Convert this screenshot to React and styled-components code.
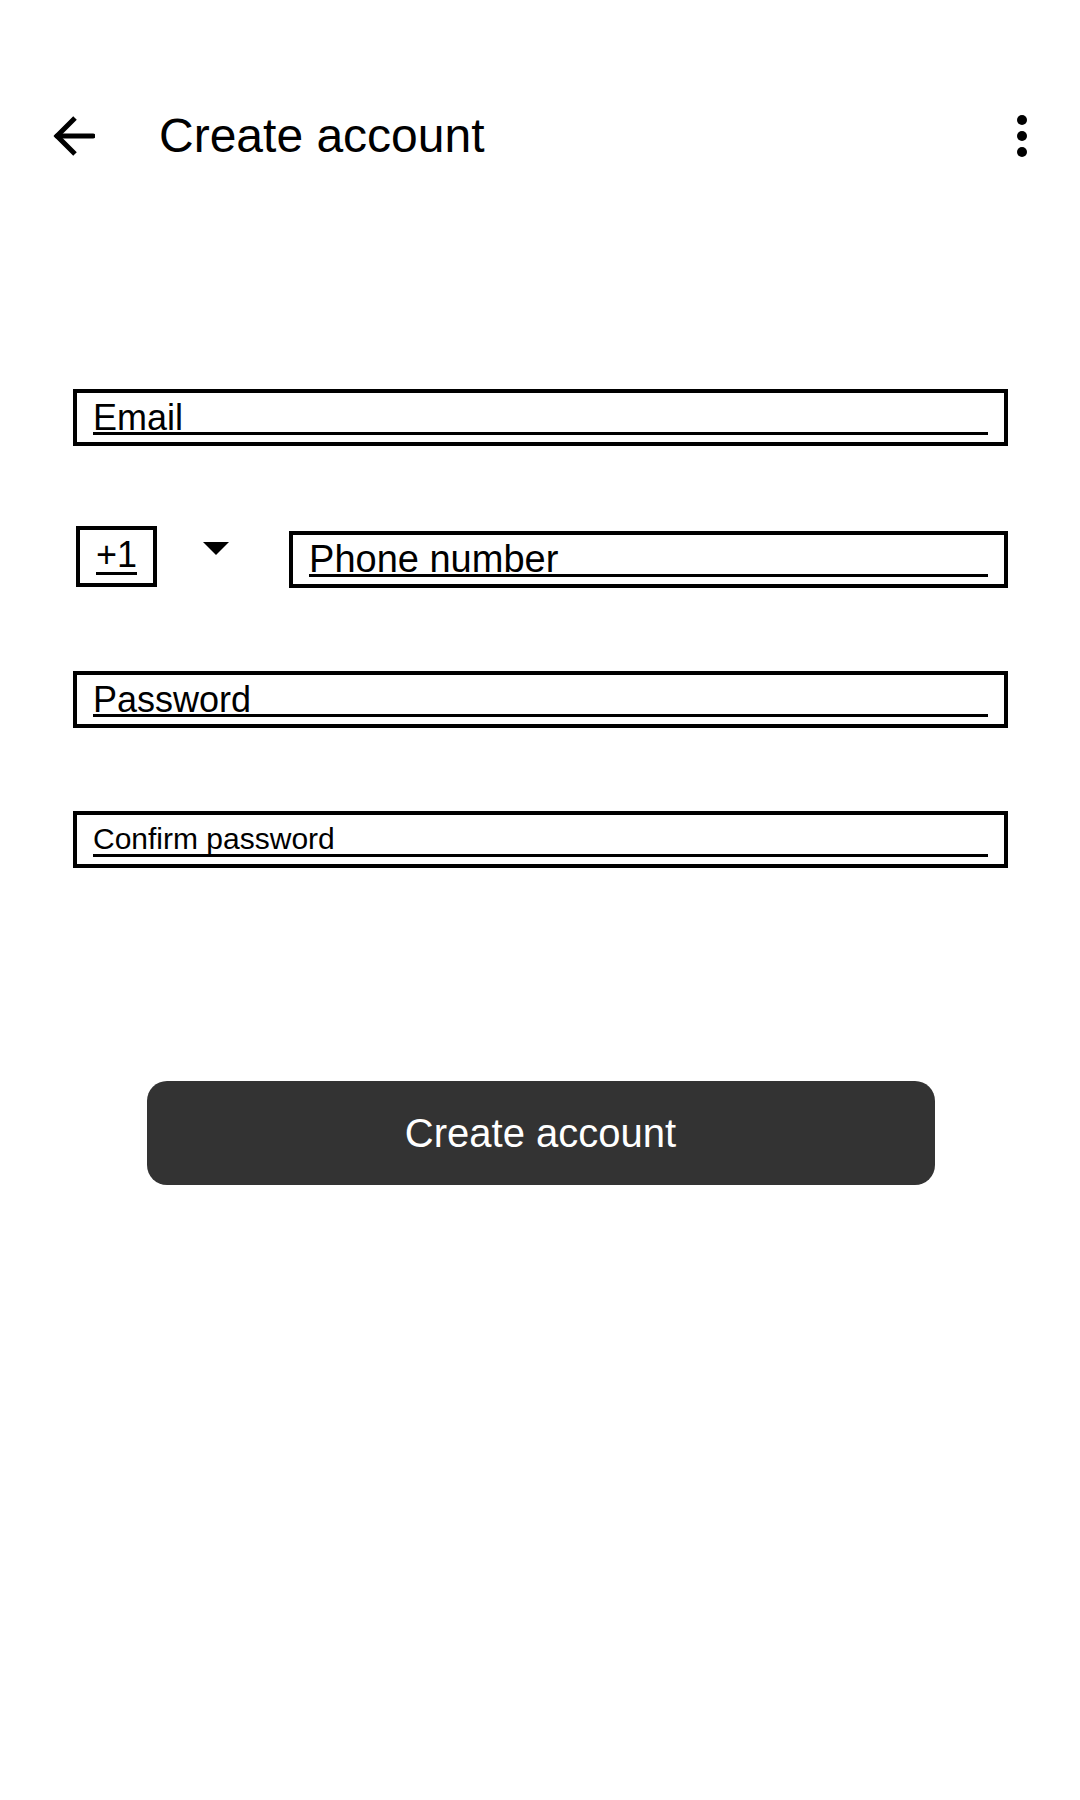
import styled, { createGlobalStyle } from 'styled-components'

const GlobalStyle = createGlobalStyle`
  html, body {
    margin: 0;
    padding: 0;
    background: #ffffff;
  }
  body {
    font-family: "Liberation Sans", Arial, sans-serif;
    color: #000000;
  }
`

export default function App() {
  return (
    <Screen>
      <GlobalStyle />
      <Header>
        <BackButton aria-label="Back">
          <svg width="42" height="42" viewBox="0 0 42 42" fill="none">
            <path d="M4 21H40" stroke="#000" strokeWidth="5" strokeLinecap="round" />
            <path d="M22 3L4 21L22 39" stroke="#000" strokeWidth="5" />
          </svg>
        </BackButton>
        <Title>Create account</Title>
        <MenuButton aria-label="More options">
          <Dot />
          <Dot />
          <Dot />
        </MenuButton>
      </Header>

      <Form>
        <InputBox>
          <Field>Email</Field>
        </InputBox>

        <PhoneRow>
          <CodeBox>
            <Field $lh={22}>+1</Field>
          </CodeBox>
          <Caret />
          <InputBox $grow $offset={5}>
            <Field $size={38} $lh={26}>Phone number</Field>
          </InputBox>
        </PhoneRow>

        <InputBox>
          <Field>Password</Field>
        </InputBox>

        <InputBox>
          <Field $size={30} $lh={25}>Confirm password</Field>
        </InputBox>

        <SubmitButton>Create account</SubmitButton>
      </Form>
    </Screen>
  )
}

const Screen = styled.div`
  width: 1080px;
  min-height: 1800px;
  display: flex;
  flex-direction: column;
`

const Header = styled.header`
  display: flex;
  align-items: center;
  height: 72px;
  margin-top: 100px;
  padding: 0 53px;
`

const BackButton = styled.div`
  width: 42px;
  height: 42px;
  display: flex;
  svg {
    display: block;
  }
`

const Title = styled.h1`
  flex: 1;
  margin: 0 0 0 64px;
  font-size: 48px;
  font-weight: 400;
  line-height: 1;
  color: #000;
`

const MenuButton = styled.div`
  display: flex;
  flex-direction: column;
  gap: 6px;
`

const Dot = styled.span`
  width: 10px;
  height: 10px;
  border-radius: 50%;
  background: #000;
`

const Form = styled.main`
  display: flex;
  flex-direction: column;
  gap: 83px;
  margin-top: 217px;
  padding: 0 72px 0 73px;
`

const InputBox = styled.div`
  border: 4px solid #000;
  padding: 11px 16px 7px;
  flex: ${p => (p.$grow ? 1 : 'none')};
  margin-top: ${p => p.$offset || 0}px;
`

const CodeBox = styled(InputBox)`
  padding: 14px 16px 8px;
`

const Field = styled.div`
  height: 28px;
  font-size: ${p => p.$size || 36}px;
  line-height: ${p => p.$lh || 28}px;
  border-bottom: 3px solid #000;
  white-space: nowrap;
  color: #000;
`

const PhoneRow = styled.div`
  display: flex;
  align-items: flex-start;
  margin-top: -3px;
  padding-left: 3px;
`

const Caret = styled.span`
  width: 0;
  height: 0;
  margin: 16px 60px 0 46px;
  border-left: 13px solid transparent;
  border-right: 13px solid transparent;
  border-top: 13px solid #000;
`

const SubmitButton = styled.button`
  align-self: center;
  width: 788px;
  height: 104px;
  margin-top: 130px;
  border: none;
  border-radius: 20px;
  background: #333333;
  color: #ffffff;
  font-family: "Liberation Sans", Arial, sans-serif;
  font-size: 40px;
  cursor: pointer;
`
